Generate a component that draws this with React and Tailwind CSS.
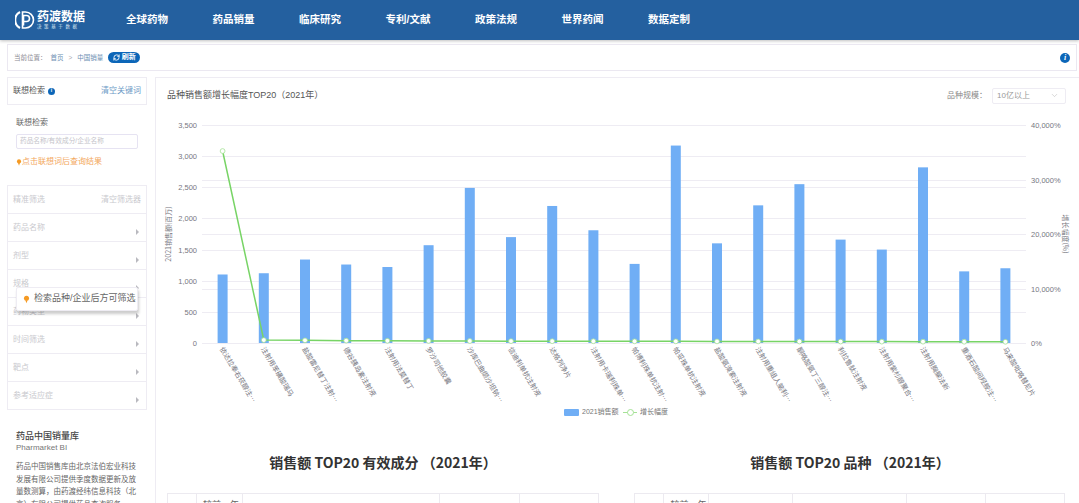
import { RefreshCw, ChevronDown } from 'lucide-react';

const navItems = ['全球药物', '药品销量', '临床研究', '专利/文献', '政策法规', '世界药闻', '数据定制'];
const filterRows = ['药品名称', '剂型', '规格', '药物类型', '时间筛选', '靶点', '参考适应症'];

const chartData = [
    { name: '依达拉奉右莰醇注…', value: 1100, growth: 35040 },
    { name: '注射用苯磺酸瑞马', value: 1120, growth: 350 },
    { name: '盐酸雷尼替丁注射…', value: 1340, growth: 300 },
    { name: '德谷胰岛素注射液', value: 1260, growth: 250 },
    { name: '注射用法莫替丁', value: 1220, growth: 220 },
    { name: '罗沙司他胶囊', value: 1570, growth: 200 },
    { name: '沙库巴曲缬沙坦钠…', value: 2490, growth: 180 },
    { name: '信迪利单抗注射液', value: 1700, growth: 160 },
    { name: '达格列净片', value: 2200, growth: 150 },
    { name: '注射用卡瑞利珠单…', value: 1810, growth: 140 },
    { name: '帕博利珠单抗注射…', value: 1270, growth: 130 },
    { name: '帕妥珠单抗注射液', value: 3170, growth: 120 },
    { name: '盐酸氨溴索注射液', value: 1600, growth: 110 },
    { name: '注射用重组人脑利…', value: 2210, growth: 100 },
    { name: '酮咯酸氨丁三醇注…', value: 2550, growth: 90 },
    { name: '利拉鲁肽注射液', value: 1660, growth: 80 },
    { name: '注射用紫杉醇聚合…', value: 1500, growth: 70 },
    { name: '注射用胸腺法新', value: 2820, growth: 60 },
    { name: '重酒石酸间羟胺注…', value: 1150, growth: 50 },
    { name: '马来酸吡咯替尼片', value: 1200, growth: 40 },
];

const leftTicks = ['0', '500', '1,000', '1,500', '2,000', '2,500', '3,000', '3,500'];
const rightTicks = ['0%', '10,000%', '20,000%', '30,000%', '40,000%'];

const BASE = 343;
const TOP = 125;
const PLOT_LEFT = 202;
const CELL = 41.2;
const barY = (v) => BASE - (v / 3500) * (BASE - TOP);
const lineY = (v) => BASE - (v / 40000) * (BASE - TOP) - 1;
const cx = (i) => PLOT_LEFT + CELL * (i + 0.5);

const Pin = ({ className }) => (
    <svg viewBox="0 0 10 12" className={className}>
        <circle cx="5" cy="4.2" r="3.6" fill="#f59a23" />
        <path d="M3.4 7 L5 11.5 L6.6 7 Z" fill="#f59a23" />
    </svg>
);

const Chart = () => (
    <svg viewBox="156 108 923 297" className="block h-[297px] w-[923px]" fontFamily="'Noto Sans CJK SC', sans-serif">
        {leftTicks.map((t, i) => {
            const y = Math.round(BASE - (i * (BASE - TOP)) / 7) + 0.5;
            return (
                <g key={t}>
                    <line x1={PLOT_LEFT} x2="1026" y1={y} y2={y} stroke="#eeecf3" strokeWidth="1" />
                    <text x="197" y={y + 2} textAnchor="end" fontSize="7.5" fill="#77777f" fontFamily="'Liberation Sans', sans-serif">{t}</text>
                </g>
            );
        })}
        {rightTicks.map((t, i) => {
            const y = Math.round(BASE - (i * (BASE - TOP)) / 4) + 0.5;
            return (
                <g key={t}>
                    <line x1={PLOT_LEFT} x2="1026" y1={y} y2={y} stroke="#eeecf3" strokeWidth="1" />
                    <text x="1031" y={y + 2} fontSize="7.5" fill="#77777f" fontFamily="'Liberation Sans', sans-serif">{t}</text>
                </g>
            );
        })}
        <text transform="translate(171 234) rotate(-90)" textAnchor="middle" fontSize="7" fill="#77777f">2021销售额(百万)</text>
        <text transform="translate(1063 234) rotate(90)" textAnchor="middle" fontSize="7" fill="#77777f">增长幅度(%)</text>
        {chartData.map((d, i) => (
            <rect key={d.name} x={cx(i) - 5} y={barY(d.value)} width="10" height={BASE - barY(d.value)} fill="#70aef5" />
        ))}
        <polyline
            points={chartData.map((d, i) => `${cx(i)},${lineY(d.growth)}`).join(' ')}
            fill="none"
            stroke="#78d466"
            strokeWidth="1.5"
        />
        {chartData.map((d, i) => (
            <circle key={d.name} cx={cx(i)} cy={lineY(d.growth)} r="2.4" fill="#fff" stroke="#a5e296" strokeWidth="0.8" />
        ))}
        {chartData.map((d, i) => (
            <text key={d.name} transform={`translate(${cx(i) - 3} 349) rotate(59)`} fontSize="7" fill="#77777f">{d.name}</text>
        ))}
    </svg>
);

const TableStub = ({ cols, className }) => (
    <div className={`flex h-[30px] border border-[#eceaf0] ${className}`}>
        {cols.map((w, i) => (
            <div key={i} style={{ width: w }} className="shrink-0 border-r border-[#eceaf0] pl-[6px] pt-[5px] text-[9px] text-[#666] last:border-r-0">
                {i === 1 ? '较前一年' : ''}
            </div>
        ))}
    </div>
);

export default function App() {
    return (
        <div className="h-[503px] w-[1079px] overflow-hidden bg-white" style={{ fontFamily: "'Liberation Sans', 'Noto Sans CJK SC', sans-serif" }}>
            <header className="flex h-10 items-center bg-[#24609f] shadow-[0_1px_3px_rgba(0,0,0,0.25)]">
                <div className="ml-[15px] flex w-[111px] items-center gap-[2px]">
                    <svg viewBox="0 0 20 20" className="h-[20px] w-[20px]">
                        <path d="M5 2 A9 9 0 0 0 5 18" fill="none" stroke="#fff" strokeWidth="2.2" />
                        <path d="M7.5 2 H10.5 A8 8 0 0 1 10.5 18 H7.5 Z" fill="none" stroke="#fff" strokeWidth="1.6" />
                        <path d="M8.5 15.5 V5.5 H11.5 A2.9 2.9 0 0 1 11.5 11.5 H8.5" fill="none" stroke="#fff" strokeWidth="1.6" />
                    </svg>
                    <div className="text-white">
                        <div className="text-[12px] font-bold leading-[14px]">药渡数据</div>
                        <div className="text-[4.5px] leading-[6px] tracking-[2.6px] text-[#dbe6f2]">决策基于数据</div>
                    </div>
                </div>
                <nav className="flex gap-[44.5px] text-[10.5px] font-bold text-white">
                    {navItems.map((item) => (
                        <span key={item}>{item}</span>
                    ))}
                </nav>
            </header>

            <div className="mx-[7px] mt-1 flex h-[27px] w-[1070px] items-center border border-[#ebe8f1] bg-white px-[6px] text-[6.5px] text-[#8b8b93]">
                <span>当前位置：</span>
                <span className="ml-[4px] text-[#6d8fb3]">首页</span>
                <span className="mx-[5px] text-[#a9a9b0]">&gt;</span>
                <span className="text-[#6d8fb3]">中国销量</span>
                <span className="ml-[5px] flex h-[11px] w-[32px] items-center justify-center gap-[2px] rounded-full bg-[#0c66b8] text-[7px] font-bold text-white">
                    <RefreshCw className="h-[7px] w-[7px]" strokeWidth={3} />
                    刷新
                </span>
                <span className="ml-auto flex h-[10px] w-[10px] items-center justify-center rounded-full bg-[#0c66b8] text-[8px] font-bold italic text-white" style={{ fontFamily: "'Liberation Serif', serif" }}>
                    i
                </span>
            </div>

            <div className="mt-[6px] flex">
                <aside className="ml-[7px] mr-[8px] w-[140px] shrink-0">
                    <div className="flex h-[28px] items-center justify-between border border-[#eeecf3] px-[5px]">
                        <span className="flex items-center gap-[3px] text-[8px] text-[#555]">
                            联想检索
                            <span className="flex h-[7px] w-[7px] items-center justify-center rounded-full bg-[#0c66b8] text-[5px] font-bold text-white">i</span>
                        </span>
                        <span className="text-[8px] text-[#6d9ac6]">清空关键词</span>
                    </div>

                    <div className="px-[9px] pt-[12px]">
                        <div className="text-[8px] leading-[12px] text-[#666]">联想检索</div>
                        <div className="mt-[5px] flex h-[15px] items-center rounded-[2px] border border-[#e6e3f2] px-[3px] text-[6.7px] text-[#c4c4ca]">
                            药品名称/有效成分/企业名称
                        </div>
                        <div className="mt-[7px] flex items-center text-[8px] leading-[12px] text-[#f3a75c]">
                            <Pin className="h-[7px] w-[6px]" />
                            点击联想词后查询结果
                        </div>
                    </div>

                    <div className="relative mt-[17px] border border-[#eeecf3]">
                        <div className="flex h-[27px] items-center justify-between px-[5px] text-[8px] text-[#c9c9ce]">
                            <span>精准筛选</span>
                            <span>清空筛选器</span>
                        </div>
                        {filterRows.map((row) => (
                            <div key={row} className="relative h-[28px] border-t border-[#eeecf3] pl-[5px] pt-[8px] text-[8px] leading-[12px] text-[#c9c9ce]">
                                {row}
                                <span className="absolute right-[7px] top-[15px] h-0 w-0 border-y-[3px] border-l-[3px] border-y-transparent border-l-[#b9b9bf]" />
                            </div>
                        ))}
                        <div className="absolute left-[8px] top-[101px] flex h-[24px] w-[122px] items-center gap-[4px] rounded-[2px] border border-[#eeecf3] bg-white pl-[6px] text-[9px] text-[#666] shadow-[1px_3px_3px_rgba(0,0,0,0.2)]">
                            <Pin className="h-[9px] w-[7px]" />
                            检索品种/企业后方可筛选
                        </div>
                    </div>

                    <div className="pl-[9px] pr-[5px] pt-[19px]">
                        <div className="text-[9px] font-medium leading-[14px] text-[#444]">药品中国销量库</div>
                        <div className="text-[8px] leading-[10px] text-[#777]">Pharmarket BI</div>
                        <p className="mt-[8px] text-[7.5px] leading-[12.5px] text-[#666]">
                            药品中国销售库由北京法伯宏业科技发展有限公司提供季度数据更新及放量数测算，由药渡经纬信息科技（北京）有限公司提供药品查询服务
                        </p>
                    </div>
                </aside>

                <main className="w-[924px] shrink-0 border-l border-t border-[#eeecf3]">
                    <div className="flex h-[30px] items-center justify-between pl-[11px] pr-[13px] pt-[5px]">
                        <span className="text-[9px] text-[#555]">品种销售额增长幅度TOP20（2021年）</span>
                        <div className="flex items-center text-[8px] text-[#888]">
                            品种规模：
                            <span className="ml-[5px] flex h-[16px] w-[74px] items-center justify-between rounded-[2px] border border-[#eeecf3] pl-[4px] pr-[6px] text-[#999]">
                                10亿以上
                                <ChevronDown className="h-[9px] w-[9px] text-[#bbb]" strokeWidth={1.5} />
                            </span>
                        </div>
                    </div>
                    <Chart />
                    <div className="mt-[2px] flex h-[10px] items-center pl-[408px] text-[7px] text-[#777]">
                        <span className="h-[7px] w-[15px] rounded-[1px] bg-[#70aef5]" />
                        <span className="ml-[3px] w-[41px]">2021销售额</span>
                        <span className="relative h-[1px] w-[14px] bg-[#a5e296]">
                            <span className="absolute left-[4px] top-[-3px] h-[7px] w-[7px] rounded-full border border-[#a5e296] bg-white" />
                        </span>
                        <span className="ml-[3px]">增长幅度</span>
                    </div>
                    <div className="mt-[35px] flex">
                        <div className="w-[479px] pl-[11px]">
                            <h2 className="h-[41px] w-[432px] text-center text-[14px] font-bold leading-[20px] text-[#333]" style={{ fontFamily: "'Noto Sans CJK SC', sans-serif" }}>
                                销售额 TOP20 有效成分 （2021年）
                            </h2>
                            <TableStub cols={[29, 46, 197, 80, 80]} className="w-[432px]" />
                        </div>
                        <div className="w-[445px]">
                            <h2 className="h-[41px] w-[431px] text-center text-[14px] font-bold leading-[20px] text-[#333]" style={{ fontFamily: "'Noto Sans CJK SC', sans-serif" }}>
                                销售额 TOP20 品种 （2021年）
                            </h2>
                            <TableStub cols={[29, 45, 84, 114, 79, 80]} className="w-[431px]" />
                        </div>
                    </div>
                </main>
            </div>
        </div>
    );
}
